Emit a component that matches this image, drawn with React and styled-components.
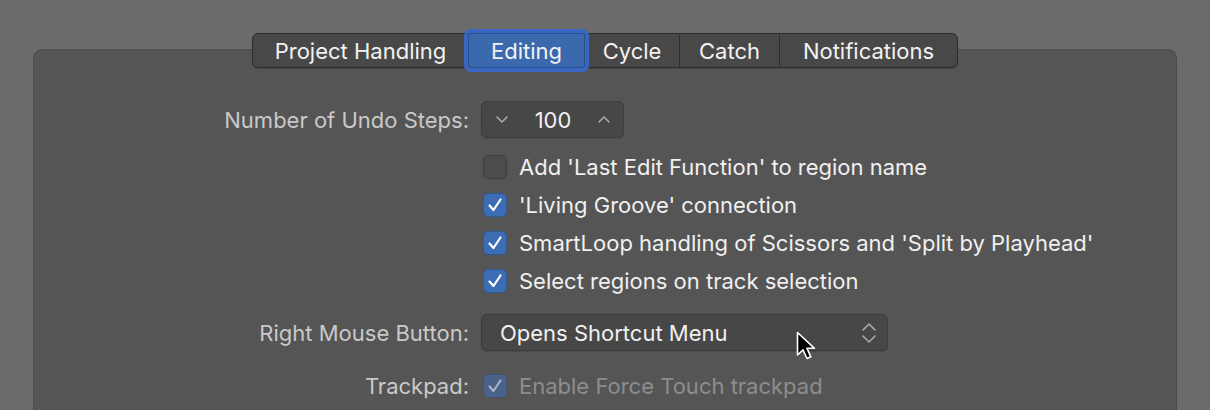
import React from "react";
import styled, { createGlobalStyle } from "styled-components";

const GlobalStyle = createGlobalStyle`
  html, body {
    margin: 0;
    padding: 0;
    background: #6b6b6b;
  }
  body {
    font-family: Inter, "Noto Sans", sans-serif;
    -webkit-font-smoothing: antialiased;
  }
`;

const Page = styled.div`
  width: 1210px;
  height: 410px;
  overflow: hidden;
  background: #6b6b6b;
  padding-top: 33px;
  box-sizing: border-box;
`;

const TabBar = styled.div`
  position: relative;
  z-index: 1;
  display: flex;
  width: fit-content;
  height: 35px;
  margin: 0 auto;
  background: #484848;
  border: 1px solid #2c2c2c;
  border-radius: 6px;
  box-sizing: border-box;
  box-shadow: 0 1px 1px rgba(0, 0, 0, 0.15);
`;

const Tab = styled.div`
  position: relative;
  display: flex;
  align-items: center;
  justify-content: center;
  width: ${(p) => p.$width}px;
  font-size: 22px;
  color: #f2f2f2;
  box-sizing: border-box;
  border-left: ${(p) => (p.$first || p.$active ? "none" : "1px solid #2c2c2c")};
  background: ${(p) => (p.$active ? "#3a69ad" : "transparent")};
  margin: ${(p) => (p.$active ? "-1px 0" : "0")};
  box-shadow: ${(p) =>
    p.$active ? "0 0 0 4px #3866c2, inset 0 0 0 1px #2b4f8a" : "none"};
  border-radius: ${(p) => (p.$active ? "3px" : "0")};
`;

const Panel = styled.div`
  margin: -19px 33px 0;
  height: 420px;
  background: #555555;
  border: 1px solid #4c4c4c;
  border-radius: 9px;
  padding-top: 51px;
  box-sizing: border-box;
`;

const Row = styled.div`
  display: grid;
  grid-template-columns: 435px auto;
  column-gap: 12px;
  align-items: center;
  height: ${(p) => p.$height || 38}px;
  margin-top: ${(p) => p.$gap || 0}px;
`;

const Label = styled.div`
  text-align: right;
  font-size: 22px;
  color: #c9c9c9;
  white-space: nowrap;
`;

const Stepper = styled.div`
  display: flex;
  align-items: center;
  justify-content: space-between;
  width: 143px;
  height: 37px;
  box-sizing: border-box;
  padding: 0 12px 0 13px;
  background: #474747;
  border: 1px solid #3c3c3c;
  border-radius: 6px;
  box-shadow: 0 1px 1px rgba(0, 0, 0, 0.12);
`;

const StepperValue = styled.span`
  font-size: 22px;
  color: #f0f0f0;
`;

const CheckRow = styled.label`
  display: flex;
  align-items: center;
  gap: 12px;
  margin-left: 2px;
  font-size: 22px;
  color: ${(p) => (p.$disabled ? "#8d8d8d" : "#f0f0f0")};
  white-space: nowrap;
`;

const Box = styled.span`
  display: flex;
  align-items: center;
  justify-content: center;
  width: 24px;
  height: 24px;
  box-sizing: border-box;
  border-radius: 5px;
  background: ${(p) =>
    p.$checked ? (p.$disabled ? "#4a6288" : "#3b6cb4") : "#4c4c4c"};
  border: 1px solid
    ${(p) => (p.$checked ? (p.$disabled ? "#3f5475" : "#30578f") : "#3d3d3d")};
`;

const Popup = styled.div`
  position: relative;
  display: flex;
  align-items: center;
  justify-content: space-between;
  width: 407px;
  height: 37px;
  box-sizing: border-box;
  padding: 0 10px 0 18px;
  background: #474747;
  border: 1px solid #3c3c3c;
  border-radius: 6px;
  box-shadow: 0 1px 1px rgba(0, 0, 0, 0.12);
  font-size: 22px;
  color: #f0f0f0;
`;

const Pointer = styled.svg`
  position: absolute;
  left: 314px;
  top: 16px;
`;

const Chevron = ({ up }) => (
  <svg width="14" height="9" viewBox="0 0 14 9">
    <path
      d={up ? "M2 7 L7 2 L12 7" : "M2 2 L7 7 L12 2"}
      fill="none"
      stroke="#a9a9a9"
      strokeWidth="1.6"
      strokeLinecap="round"
      strokeLinejoin="round"
    />
  </svg>
);

const UpDown = () => (
  <svg width="16" height="24" viewBox="0 0 16 24">
    <path
      d="M2 9 L8 3 L14 9 M2 15 L8 21 L14 15"
      fill="none"
      stroke="#a9a9a9"
      strokeWidth="1.6"
      strokeLinecap="round"
      strokeLinejoin="round"
    />
  </svg>
);

const Check = ({ color }) => (
  <svg width="18" height="18" viewBox="0 0 18 18">
    <path
      d="M3.5 9.5 L7.5 14 L14.5 3.5"
      fill="none"
      stroke={color}
      strokeWidth="2.2"
      strokeLinecap="round"
      strokeLinejoin="round"
    />
  </svg>
);

const Checkbox = ({ checked, disabled, children }) => (
  <CheckRow $disabled={disabled}>
    <Box $checked={checked} $disabled={disabled}>
      {checked && <Check color={disabled ? "#a9b3c4" : "#ffffff"} />}
    </Box>
    {children}
  </CheckRow>
);

const tabs = [
  { name: "Project Handling", width: 215 },
  { name: "Editing", width: 117, active: true },
  { name: "Cycle", width: 94 },
  { name: "Catch", width: 100 },
  { name: "Notifications", width: 178 },
];

const options = [
  { text: "Add 'Last Edit Function' to region name", checked: false },
  { text: "'Living Groove' connection", checked: true },
  { text: "SmartLoop handling of Scissors and 'Split by Playhead'", checked: true },
  { text: "Select regions on track selection", checked: true },
];

export default function App() {
  return (
    <Page>
      <GlobalStyle />
      <TabBar>
        {tabs.map((t, i) => (
          <Tab key={t.name} $width={t.width} $active={t.active} $first={i === 0 || tabs[i - 1].active}>
            {t.name}
          </Tab>
        ))}
      </TabBar>
      <Panel>
        <Row $height={37}>
          <Label>Number of Undo Steps:</Label>
          <Stepper>
            <Chevron />
            <StepperValue>100</StepperValue>
            <Chevron up />
          </Stepper>
        </Row>
        {options.map((o, i) => (
          <Row key={o.text} $gap={i === 0 ? 10 : 0}>
            <span />
            <Checkbox checked={o.checked}>{o.text}</Checkbox>
          </Row>
        ))}
        <Row $height={37} $gap={14}>
          <Label>Right Mouse Button:</Label>
          <Popup>
            Opens Shortcut Menu
            <UpDown />
            <Pointer width="22" height="32" viewBox="0 0 22 32">
              <path
                d="M1.5 1.5 L1.5 24 L7 18.8 L11 27.5 L14.8 25.8 L11 17.3 L18.5 17.3 Z"
                fill="#000"
                stroke="#fff"
                strokeWidth="1.6"
                strokeLinejoin="round"
              />
            </Pointer>
          </Popup>
        </Row>
        <Row $gap={16}>
          <Label>Trackpad:</Label>
          <Checkbox checked disabled>
            Enable Force Touch trackpad
          </Checkbox>
        </Row>
      </Panel>
    </Page>
  );
}
